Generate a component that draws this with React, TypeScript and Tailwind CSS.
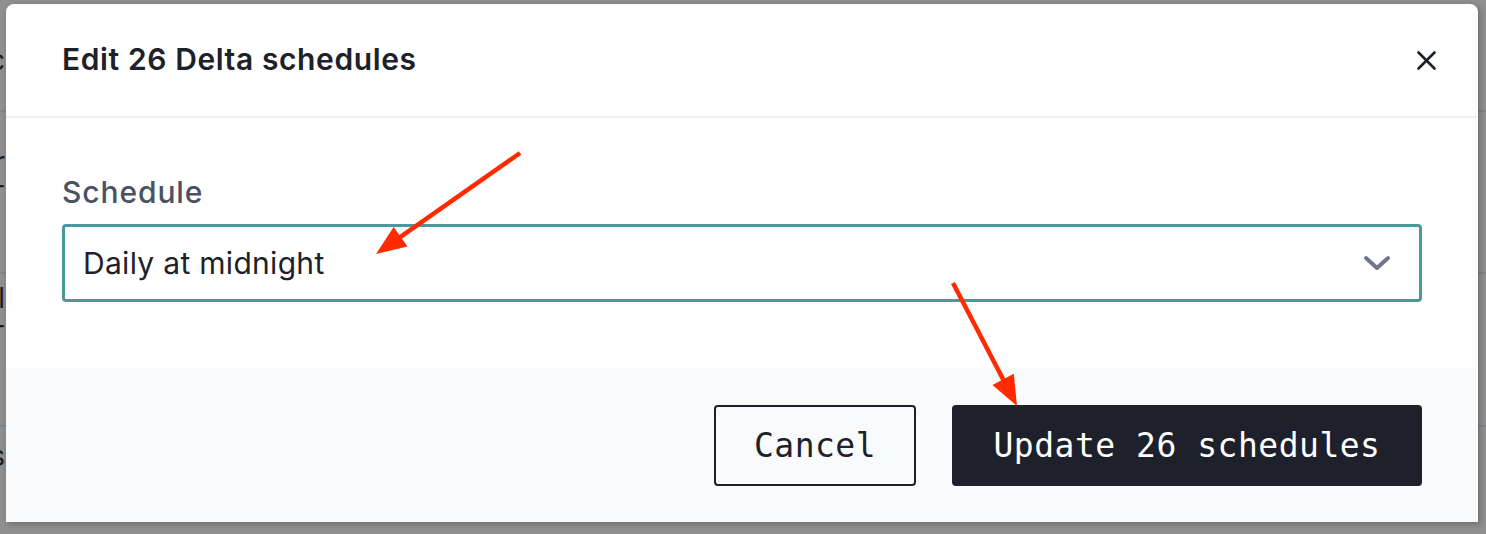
function Arrow({ x1, y1, x2, y2 }: { x1: number; y1: number; x2: number; y2: number }) {
  const dx = x2 - x1;
  const dy = y2 - y1;
  const len = Math.hypot(dx, dy);
  const ux = dx / len;
  const uy = dy / len;
  const head = 30;
  const half = 12;
  const bx = x2 - ux * head;
  const by = y2 - uy * head;
  const p1 = `${bx - uy * half},${by + ux * half}`;
  const p2 = `${bx + uy * half},${by - ux * half}`;
  return (
    <g>
      <line x1={x1} y1={y1} x2={bx + ux * 4} y2={by + uy * 4} stroke="#ff2a00" strokeWidth={4.5} />
      <polygon points={`${x2},${y2} ${p1} ${p2}`} fill="#ff2a00" />
    </g>
  );
}

function Peek({ children, className }: { children: string; className: string }) {
  return <div className={`flex justify-end whitespace-nowrap ${className}`}>{children}</div>;
}

export default function App() {
  return (
    <div className="relative h-[534px] w-[1486px] overflow-hidden bg-[#8f8f8f] font-['Inter',sans-serif]">
      {/* page behind the overlay */}
      <div className="absolute inset-0 flex flex-col">
        <div className="h-[112px] border-b-2 border-[#7f838a]" />
        <div className="h-[162px] border-b-2 border-[#7f838a]" />
        <div className="h-[153px] border-b-2 border-[#7f838a]" />
      </div>
      <div className="absolute left-0 top-0 h-full w-[5px] overflow-hidden text-[28px] leading-[32px] text-[#1b1e24]">
        <Peek className="mt-[44px]">c</Peek>
        <Peek className="mt-[70px]">r</Peek>
        <Peek className="mt-[2px]">T</Peek>
        <Peek className="mt-[70px]">l</Peek>
        <Peek className="mt-[6px]">T</Peek>
        <Peek className="mt-[88px]">s</Peek>
      </div>

      <div className="absolute left-[6px] top-[4px] flex h-[518px] w-[1472px] flex-col rounded-t-lg bg-white shadow-[2px_2px_6px_rgba(0,0,0,0.25)]">
        <div className="flex h-[114px] items-center justify-between border-b-2 border-[#edf0f3] pl-[56px] pr-[42px]">
          <h1 className="pb-[2px] text-[30px] font-semibold tracking-[0.6px] text-[#1d2129]">Edit 26 Delta schedules</h1>
          <svg width="19" height="19" viewBox="0 0 19 19" className="text-[#1d2129]">
            <path d="M1.5 1.5 17.5 17.5M17.5 1.5 1.5 17.5" stroke="currentColor" strokeWidth={2.6} strokeLinecap="round" />
          </svg>
        </div>

        <div className="flex h-[250px] flex-col px-[56px] pt-[55px]">
          <label className="text-[30px] font-medium leading-[38px] tracking-[0.9px] text-[#4a5262]">Schedule</label>
          <div className="mt-[13px] flex h-[78px] items-center justify-between rounded-[4px] border-[3px] border-[#4a9a9c] pl-[18px] pr-[28px]">
            <span className="text-[30px] tracking-[0.3px] text-[#1d2129]">Daily at midnight</span>
            <svg width="28" height="16" viewBox="0 0 28 16" className="text-[#6f7789]">
              <path d="M3 3 14 13 25 3" fill="none" stroke="currentColor" strokeWidth={4} strokeLinecap="round" strokeLinejoin="round" />
            </svg>
          </div>
        </div>

        <div className="flex flex-1 items-start justify-end gap-[36px] bg-[#f9fafb] pr-[56px] pt-[37px] font-['DejaVu_Sans_Mono',monospace] text-[33px] tracking-[0.5px]">
          <button className="h-[81px] w-[202px] rounded-[4px] border-2 border-[#1d2129] text-[#1d2129]">Cancel</button>
          <button className="h-[81px] w-[470px] rounded-[4px] bg-[#1e212b] text-white">Update 26 schedules</button>
        </div>
      </div>

      <svg className="pointer-events-none absolute inset-0" width={1486} height={534}>
        <Arrow x1={520} y1={153} x2={376} y2={254} />
        <Arrow x1={953} y1={283} x2={1017} y2={406} />
      </svg>
    </div>
  );
}
